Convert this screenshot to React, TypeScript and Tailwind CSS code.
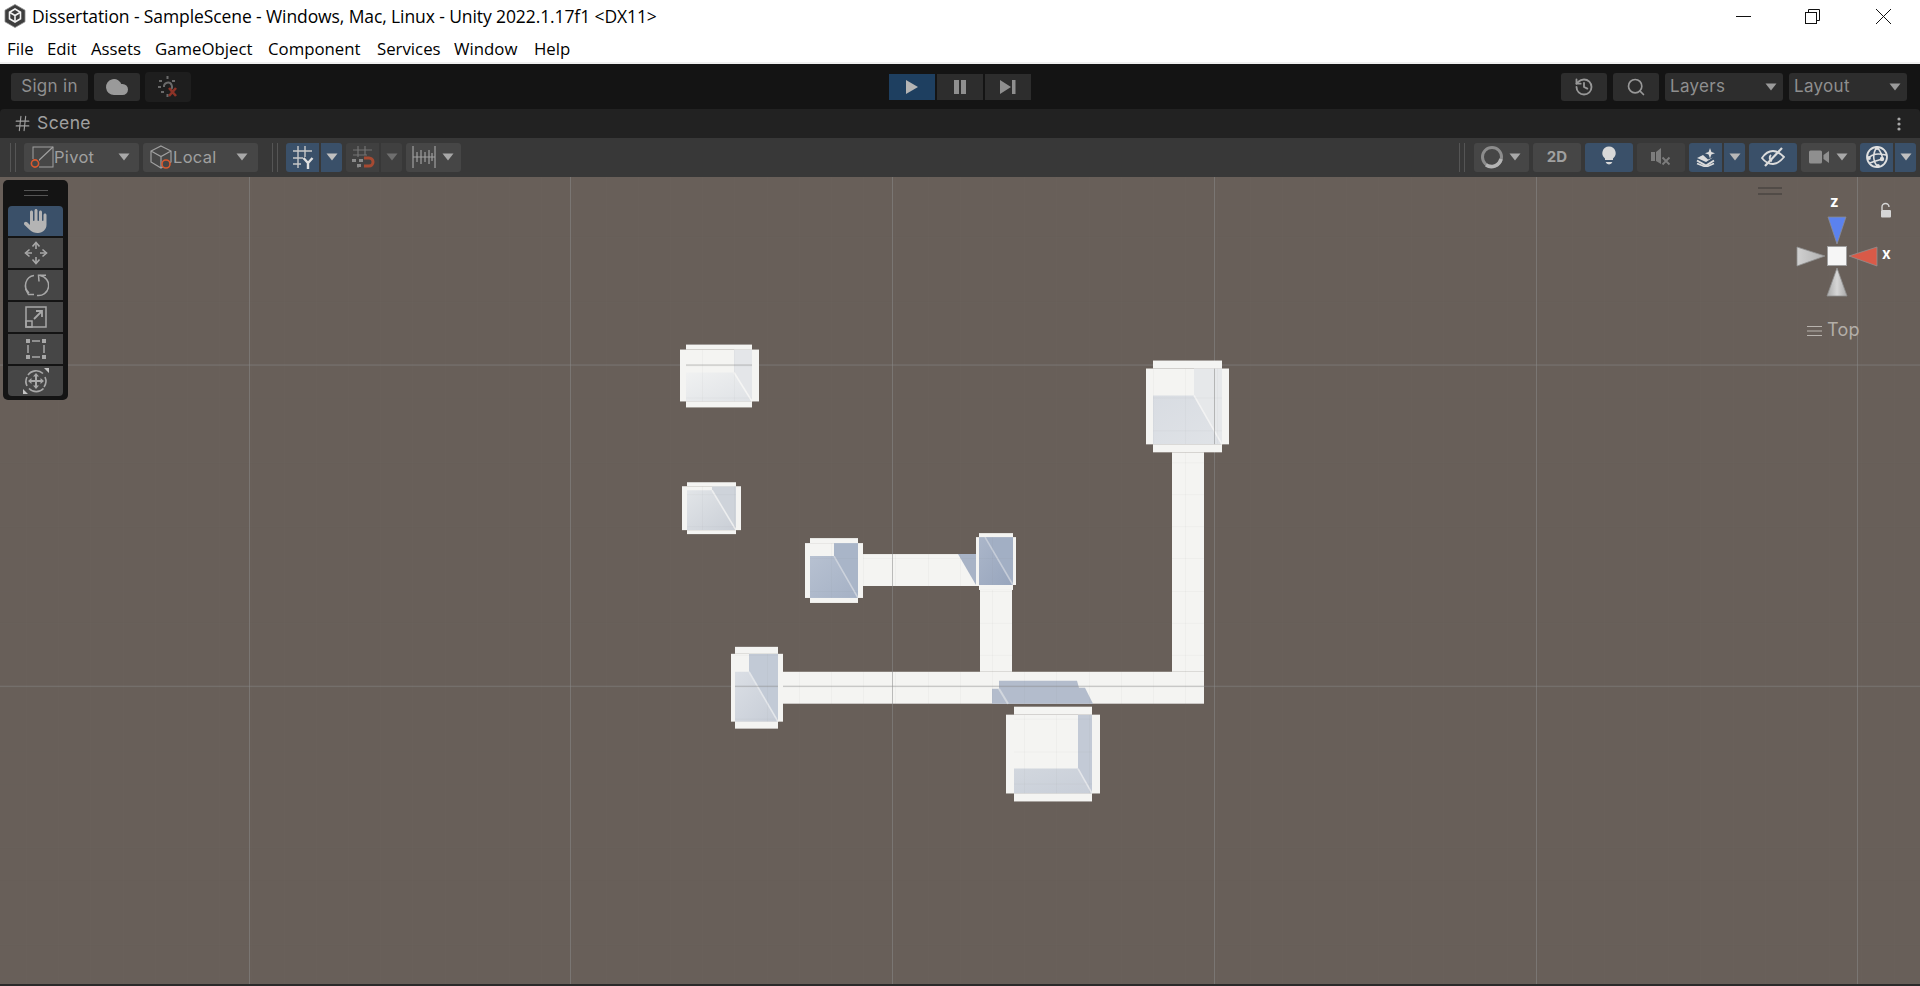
import React from "react";
import { History, Search, EyeOff, Hash, Cloud } from "lucide-react";
import { FaHand } from "react-icons/fa6";

const inter = "font-['Inter','Liberation_Sans',sans-serif]";

function Caret({ color = "#a8a8a8" }: { color?: string }) {
  return (
    <svg width="12" height="8" viewBox="0 0 12 8" className="shrink-0">
      <path d="M0.5 0.5H11.5L6 7.5Z" fill={color} />
    </svg>
  );
}

function UnityLogo() {
  return (
    <svg width="22" height="24" viewBox="0 0 22 24">
      <path d="M11 0.5L21 6.2V17.8L11 23.5L1 17.8V6.2Z" fill="#3d3d3d" stroke="#8a8a8a" strokeWidth="0.8" />
      <path d="M11 5L16.5 8.2V14.8L11 18L5.5 14.8V8.2Z" fill="none" stroke="#f2f2f2" strokeWidth="1.6" />
      <path d="M5.5 8.2L11 11.5L16.5 8.2M11 11.5V18" fill="none" stroke="#f2f2f2" strokeWidth="1.6" />
    </svg>
  );
}

function Collab() {
  return (
    <svg width="24" height="24" viewBox="0 0 24 24">
      <g fill="#6a6a6a">
        <rect x="10.5" y="1" width="2" height="3" />
        <rect x="3" y="5" width="3" height="2" />
        <rect x="16" y="5" width="3" height="2" />
        <rect x="2" y="11" width="3" height="2" />
        <rect x="5" y="16" width="3" height="2" />
        <rect x="10.5" y="19" width="2" height="3" />
      </g>
      <path d="M8 12a4 4 0 1 1 6 3" fill="none" stroke="#6a6a6a" strokeWidth="2" />
      <path d="M13 13l7 8M20 13l-7 8" stroke="#8c3327" strokeWidth="2.6" />
    </svg>
  );
}

function PivotIcon() {
  return (
    <svg width="24" height="24" viewBox="0 0 24 24">
      <rect x="3" y="2" width="20" height="20" fill="none" stroke="#a0a0a0" strokeWidth="1" />
      <path d="M6 18L23 2" stroke="#a0a0a0" strokeWidth="1.2" />
      <rect x="0" y="14" width="9" height="10" fill="#464646" />
      <circle cx="5" cy="18.5" r="3.6" fill="none" stroke="#d9592e" strokeWidth="1.6" />
    </svg>
  );
}

function LocalIcon() {
  return (
    <svg width="24" height="24" viewBox="0 0 24 24">
      <path d="M12 1L22 6V17L12 23L2 17V6Z M2 6L12 11.5L22 6 M12 11.5V23" fill="none" stroke="#a0a0a0" strokeWidth="1.2" />
      <circle cx="17" cy="19" r="4" fill="#464646" stroke="#d9592e" strokeWidth="1.6" />
    </svg>
  );
}

function SnapGridIcon() {
  return (
    <svg width="24" height="24" viewBox="0 0 24 24">
      <path d="M7 1V23M14 1V12M2 6H21M2 13H12M2 19H10" stroke="#c8c8c8" strokeWidth="1.4" fill="none" />
      <path d="M12.5 13L17 18L21.5 13M17 18V24" stroke="#e0e0e0" strokeWidth="2.4" fill="none" />
    </svg>
  );
}

function MagnetIcon() {
  return (
    <svg width="24" height="24" viewBox="0 0 24 24">
      <path d="M7 1V12M14 1V10M2 5H21M2 10H16M7 21V23" stroke="#737373" strokeWidth="1.2" fill="none" />
      <rect x="1" y="14" width="4" height="3" fill="#8a8a8a" />
      <rect x="8" y="14" width="4" height="3" fill="#8a8a8a" />
      <rect x="6" y="19" width="4" height="3" fill="#8a8a8a" />
      <path d="M13 13H18a4 4 0 0 1 0 8H13" fill="none" stroke="#a64a32" strokeWidth="3" />
    </svg>
  );
}

function RulerIcon() {
  return (
    <svg width="24" height="22" viewBox="0 0 24 22">
      <path d="M1 0V22M23 0V22M1 11H23" stroke="#a0a0a0" strokeWidth="1.2" />
      <path d="M5 6V16M9 4V18M13 6V16M17 4V18M20 7V15" stroke="#a0a0a0" strokeWidth="1.2" />
    </svg>
  );
}

function OrbIcon() {
  return (
    <svg width="24" height="24" viewBox="0 0 24 24">
      <circle cx="12" cy="12" r="9.5" fill="none" stroke="#8c8c8c" strokeWidth="3" />
      <path d="M6 20a10 10 0 0 0 15 -6" fill="none" stroke="#b4b4b4" strokeWidth="3.6" />
    </svg>
  );
}

function Bulb() {
  return (
    <svg width="16" height="22" viewBox="0 0 16 22">
      <path d="M8 0.5a6.6 6.6 0 0 1 4 11.9V14H4v-1.6A6.6 6.6 0 0 1 8 0.5Z" fill="#d8d8d8" />
      <path d="M4.6 16h6.8a3.6 3.6 0 0 1 -6.8 0Z" fill="#d8d8d8" />
    </svg>
  );
}

function AudioOff() {
  return (
    <svg width="22" height="20" viewBox="0 0 22 20">
      <rect x="1" y="5" width="4" height="9" fill="#7c7c7c" />
      <path d="M6 5L11 1V17L6 14Z" fill="#7c7c7c" />
      <path d="M12.5 10.5L19.5 17.5M19.5 10.5L12.5 17.5" stroke="#7c7c7c" strokeWidth="1.8" />
    </svg>
  );
}

function FxIcon() {
  return (
    <svg width="20" height="20" viewBox="0 0 20 20">
      <path d="M14 1L15.4 5L19 6.2L15.4 7.5L14 11.5L12.6 7.5L9 6.2L12.6 5Z" fill="#dcdcdc" />
      <path d="M1 11L7 8L12 12.5L17 10.5L10 15Z" fill="#dcdcdc" />
      <path d="M1 13.5L10 18.5L18 13.5" fill="none" stroke="#dcdcdc" strokeWidth="2" />
      <path d="M1 16.5L10 20L18 16.5" fill="none" stroke="#dcdcdc" strokeWidth="1.6" />
    </svg>
  );
}

function EyeSlash() {
  return (
    <svg width="24" height="20" viewBox="0 0 24 20" fill="none" stroke="#dcdcdc">
      <path d="M1 11C5 5 9 4 12 4C16 4 19 6 23 10C19 15 16 17 12 17C8 17 4 15 1 11Z" strokeWidth="1.8" />
      <path d="M10 8a3.5 3.5 0 0 0 1 6" strokeWidth="2" />
      <path d="M4 19L21 1" strokeWidth="2.2" />
    </svg>
  );
}

function CameraIcon() {
  return (
    <svg width="20" height="14" viewBox="0 0 20 14">
      <rect x="0" y="0.5" width="13" height="13" rx="1.5" fill="#8f8f8f" />
      <path d="M14.5 5L20 1V13L14.5 9Z" fill="#8f8f8f" />
    </svg>
  );
}

function GizmoIcon() {
  return (
    <svg width="24" height="24" viewBox="0 0 24 24">
      <circle cx="12" cy="12" r="10" fill="none" stroke="#e0e0e0" strokeWidth="1.8" />
      <path d="M3 13C8 9 12 8 21 10M12 2C7 9 8 17 13 22M12 2C16 7 18 11 17 14M5 18C10 16 14 15 17 14" fill="none" stroke="#e0e0e0" strokeWidth="1.6" />
      <circle cx="12" cy="3" r="1.9" fill="#e0e0e0" />
      <circle cx="4" cy="13" r="1.9" fill="#e0e0e0" />
      <circle cx="17" cy="14" r="2.2" fill="#e0e0e0" />
      <circle cx="13" cy="21" r="1.9" fill="#e0e0e0" />
    </svg>
  );
}

function MoveIcon() {
  return (
    <svg width="26" height="26" viewBox="0 0 26 26" fill="none" stroke="#a8a8a8" strokeWidth="1.6">
      <path d="M13 3V9M13 17V23M3 13H9M17 13H23" />
      <path d="M9.5 6.5L13 2.5L16.5 6.5M9.5 19.5L13 23.5L16.5 19.5M6.5 9.5L2.5 13L6.5 16.5M19.5 9.5L23.5 13L19.5 16.5" />
    </svg>
  );
}

function RotateIcon() {
  return (
    <svg width="26" height="26" viewBox="0 0 26 26" fill="none" stroke="#a8a8a8" strokeWidth="1.5">
      <path d="M11 3.5A10 10 0 0 0 6 21" />
      <path d="M17 3.5A10 10 0 0 1 14 23.5" />
      <path d="M16 9.5L15.5 3.2H23" />
      <path d="M2.5 17L5.5 22.5L11 22.5" />
    </svg>
  );
}

function ScaleIcon() {
  return (
    <svg width="24" height="24" viewBox="0 0 24 24" fill="none" stroke="#a8a8a8" strokeWidth="1.5">
      <rect x="2" y="2" width="20" height="20" />
      <rect x="2" y="16" width="6" height="6" />
      <path d="M10 14L18 6M12 6H18V12" strokeWidth="1.8" />
    </svg>
  );
}

function RectIcon() {
  return (
    <svg width="22" height="22" viewBox="0 0 22 22" fill="#a8a8a8">
      <rect x="1" y="1" width="4" height="4" />
      <rect x="17" y="1" width="4" height="4" />
      <rect x="1" y="17" width="4" height="4" />
      <rect x="17" y="17" width="4" height="4" />
      <path d="M7 3H15M7 19H15M3 7V15M19 7V15" stroke="#a8a8a8" strokeWidth="1.5" />
    </svg>
  );
}

function TransformIcon() {
  return (
    <svg width="26" height="26" viewBox="0 0 26 26" fill="none" stroke="#a8a8a8" strokeWidth="1.6">
      <path d="M5 7A10 10 0 0 1 20 5.5M22 9A10 10 0 0 1 21 19M20.5 20.5A10 10 0 0 1 6 20.5M4 18A10 10 0 0 1 4 9" />
      <path d="M13 6V20M6 13H20" strokeWidth="2" />
      <path d="M10 8.5L13 5L16 8.5Z M10 17.5L13 21L16 17.5Z M8.5 10L5 13L8.5 16Z M17.5 10L21 13L17.5 16Z" fill="#a8a8a8" stroke="none" />
      <path d="M0 26V21L5 26Z M26 0V5L21 0Z" fill="#c4c4c4" stroke="none" />
    </svg>
  );
}

type RoomDef = {
  x0: number; x1: number; y0: number; y1: number;
  wx0: number; wx1: number; wy0: number; wy1: number;
  cx: number; cy: number;
  right: string; bottomId: string; hl: string;
};

const rooms: RoomDef[] = [
  { x0: 686, x1: 752, y0: 345, y1: 408, wx0: 680, wx1: 759, wy0: 350, wy1: 402, cx: 734, cy: 373, right: "#e4e6e9", bottomId: "b1", hl: "#f5f5f4" },
  { x0: 687, x1: 736, y0: 483, y1: 535, wx0: 682, wx1: 741, wy0: 487, wy1: 531, cx: 712, cy: 491, right: "#ced3da", bottomId: "b2", hl: "#edeeef" },
  { x0: 810, x1: 858, y0: 539, y1: 604, wx0: 805, wx1: 863, wy0: 544, wy1: 599, cx: 834, cy: 557, right: "#a9b5c8", bottomId: "b3", hl: "#ccd2dc" },
  { x0: 979, x1: 1013, y0: 534, y1: 591, wx0: 976, wx1: 1016, wy0: 538, wy1: 586, cx: 985, cy: 538, right: "#a2afc4", bottomId: "b4", hl: "#c5ccd8" },
  { x0: 735, x1: 778, y0: 648, y1: 730, wx0: 731, wx1: 783, wy0: 655, wy1: 723, cx: 749, cy: 673, right: "#c2cad6", bottomId: "b5", hl: "#e3e6ea" },
  { x0: 1153, x1: 1222, y0: 361, y1: 453, wx0: 1146, wx1: 1229, wy0: 369, wy1: 445, cx: 1194, cy: 396, right: "#e6e8ea", bottomId: "b6", hl: "#f3f3f3" },
  { x0: 1014, x1: 1092, y0: 708, y1: 803, wx0: 1006, wx1: 1100, wy0: 716, wy1: 795, cx: 1078, cy: 770, right: "#c3cad6", bottomId: "b7", hl: "#e4e6ea" },
];

const gradients: [string, string, string][] = [
  ["b1", "#f0f1f1", "#dfe2e6"],
  ["b2", "#e2e5e8", "#c9ced6"],
  ["b3", "#b7c1d1", "#a5b1c5"],
  ["b4", "#abb6c9", "#97a5bd"],
  ["b5", "#dbdfe5", "#c6ccd6"],
  ["b6", "#d8dce2", "#e0e3e7"],
  ["b7", "#d2d7de", "#c8ced8"],
];

const WHITE = "#f4f4f2";

function SceneView() {
  const minorX = Array.from({ length: 61 }, (_, i) => 26 + i * 32.2);
  const minorY = Array.from({ length: 27 }, (_, i) => 173 + i * 32.2);
  const majorX = [249, 570, 892, 1214, 1536, 1857];
  const majorY = [365, 687];
  return (
    <svg className="absolute inset-0 h-full w-full" viewBox="0 177 1920 809" preserveAspectRatio="none">
      <defs>
        {gradients.map(([id, a, b]) => (
          <linearGradient key={id} id={id} x1="0" y1="0" x2="1" y2="1">
            <stop offset="0" stopColor={a} />
            <stop offset="1" stopColor={b} />
          </linearGradient>
        ))}
      </defs>
      <rect x="0" y="177" width="1920" height="809" fill="#685f59" />
      <g fill={WHITE}>
        <rect x="863" y="555" width="117" height="32" />
        <rect x="980" y="591" width="32" height="82" />
        <rect x="783" y="673" width="421" height="32" />
        <rect x="1172" y="453" width="32" height="220" />
      </g>
      <path d="M958 555H976V586Z" fill="#a8b3c6" />
      <path d="M999 682H1077L1079 689H1085L1093 705H992V690H999Z" fill="#b3bccc" />
      <path d="M999 690L1008 705" stroke="#d2d7de" strokeWidth="2" />
      {rooms.map((r, i) => (
        <g key={i}>
          <rect x={r.x0} y={r.wy0} width={r.x1 - r.x0} height={r.wy1 - r.wy0} fill={WHITE} />
          <path d={`M${r.cx} ${r.wy0}H${r.x1}V${r.wy1}L${r.cx} ${r.cy}Z`} fill={r.right} />
          <path d={`M${r.x0} ${r.cy}H${r.cx}L${r.x1} ${r.wy1}H${r.x0}Z`} fill={`url(#${r.bottomId})`} />
          <path d={`M${r.cx} ${r.cy}L${r.x1} ${r.wy1}`} stroke={r.hl} strokeWidth="1.6" />
        </g>
      ))}
      <g stroke="#8a8a8a" strokeOpacity="0.05" strokeWidth="1" shapeRendering="crispEdges">
        {minorX.map((x) => (
          <line key={x} x1={Math.round(x) + 0.5} x2={Math.round(x) + 0.5} y1="177" y2="986" />
        ))}
        {minorY.map((y) => (
          <line key={y} y1={Math.round(y) + 0.5} y2={Math.round(y) + 0.5} x1="0" x2="1920" />
        ))}
      </g>
      <g stroke="#8a8a8a" strokeOpacity="0.55" strokeWidth="1" shapeRendering="crispEdges">
        {majorX.map((x) => (
          <line key={x} x1={x + 0.5} x2={x + 0.5} y1="177" y2="986" />
        ))}
        {majorY.map((y) => (
          <line key={y} y1={y + 0.5} y2={y + 0.5} x1="0" x2="1920" />
        ))}
      </g>
      <g fill={WHITE}>
        {rooms.map((r, i) => (
          <g key={i}>
            <rect x={r.x0} y={r.y0} width={r.x1 - r.x0} height={r.wy0 - r.y0} />
            <rect x={r.x0} y={r.wy1} width={r.x1 - r.x0} height={r.y1 - r.wy1} />
            <rect x={r.wx0} y={r.wy0} width={r.x0 - r.wx0} height={r.wy1 - r.wy0} />
            <rect x={r.x1} y={r.wy0} width={r.wx1 - r.x1} height={r.wy1 - r.wy0} />
          </g>
        ))}
      </g>
    </svg>
  );
}

function Gizmo() {
  return (
    <div className="absolute left-[1740px] top-0 h-[180px] w-[180px]">
      <svg className="absolute inset-0" width="180" height="180" viewBox="1740 177 180 180">
        <defs>
          <linearGradient id="coneH" x1="0" y1="0" x2="1" y2="0">
            <stop offset="0" stopColor="#d0d0d0" />
            <stop offset="1" stopColor="#b0b0b0" />
          </linearGradient>
          <linearGradient id="coneV" x1="0" y1="0" x2="1" y2="0">
            <stop offset="0" stopColor="#a8a8a8" />
            <stop offset="0.5" stopColor="#d6d6d6" />
            <stop offset="1" stopColor="#a8a8a8" />
          </linearGradient>
        </defs>
        <path d="M1758 188H1782M1758 194H1782" stroke="#4a4541" strokeWidth="1.4" />
        <path d="M1828 217H1846L1837 244Z" fill="#5b82ee" stroke="#8a8a90" strokeWidth="0.8" />
        <path d="M1797 247V266L1825 256Z" fill="url(#coneH)" stroke="#8f8f8f" strokeWidth="0.8" />
        <path d="M1877 247V266L1849 256Z" fill="#d95a48" stroke="#8f8f8f" strokeWidth="0.8" />
        <path d="M1837 268L1827 296H1847Z" fill="url(#coneV)" stroke="#8f8f8f" strokeWidth="0.8" />
        <rect x="1827.5" y="246.5" width="19" height="19" fill="#f6f6f6" stroke="#a0a0a0" />
        <path d="M1807 326.5H1822M1807 331H1822M1807 335.5H1822" stroke="#b8b3ae" strokeWidth="1.2" />
        <path d="M1882 210V207a3.5 3.5 0 0 1 7 0" fill="none" stroke="#d6d6d6" strokeWidth="1.4" />
        <rect x="1881" y="210" width="10" height="7.5" rx="1" fill="#d6d6d6" />
      </svg>
      <span className={`${inter} absolute left-[90px] top-[17px] text-[15px] leading-4 font-bold text-white`}>z</span>
      <span className={`${inter} absolute left-[142px] top-[69px] text-[15px] leading-4 font-bold text-white`}>x</span>
      <span className={`${inter} absolute left-[87px] top-[143px] text-[18px] leading-5 tracking-[0.3px] text-[#b3aea8]`}>Top</span>
    </div>
  );
}

function ToolPalette() {
  const tools = [
    { key: "hand", active: true, icon: <FaHand size={24} color="#b4b4b4" /> },
    { key: "move", active: false, icon: <MoveIcon /> },
    { key: "rot", active: false, icon: <RotateIcon /> },
    { key: "scale", active: false, icon: <ScaleIcon /> },
    { key: "rect", active: false, icon: <RectIcon /> },
    { key: "tr", active: false, icon: <TransformIcon /> },
  ];
  return (
    <div className="absolute left-[3px] top-[3px] flex h-[220px] w-[65px] flex-col rounded-[5px] bg-[#141414] px-[5px] pb-[4px]">
      <div className="flex h-[26px] flex-col items-center justify-center gap-[4px]">
        <div className="h-px w-[24px] bg-[#555]" />
        <div className="h-px w-[24px] bg-[#555]" />
      </div>
      <div className="flex flex-col gap-[2px]">
        {tools.map((t, i) => (
          <div
            key={t.key}
            className={
              "flex h-[30px] items-center justify-center " +
              (t.active ? "bg-[#3a5069] " : "bg-[#464646] ") +
              (i === 0 ? "rounded-t-[4px]" : i === 5 ? "rounded-b-[4px]" : "")
            }
          >
            {t.icon}
          </div>
        ))}
      </div>
    </div>
  );
}

export default function App() {
  return (
    <div className="flex h-[986px] w-[1920px] flex-col overflow-hidden bg-white">
      <div className="relative flex h-[32px] items-center bg-white pl-[4px]">
        <UnityLogo />
        <span className="ml-[6px] pt-[1px] font-['Open_Sans',sans-serif] text-[17.5px] tracking-[-0.1px] whitespace-nowrap text-black">
          Dissertation - SampleScene - Windows, Mac, Linux - Unity 2022.1.17f1 &lt;DX11&gt;
        </span>
        <div className="ml-auto flex items-center">
          <svg width="15" height="15" viewBox="0 0 15 15" className="mr-[54px]">
            <path d="M0 7.5H15" stroke="#111" strokeWidth="1" />
          </svg>
          <svg width="15" height="15" viewBox="0 0 15 15" className="mr-[56px]">
            <rect x="0.5" y="3.5" width="11" height="11" fill="none" stroke="#111" />
            <path d="M3.5 3.5V0.5H14.5V11.5H11.5" fill="none" stroke="#111" />
          </svg>
          <svg width="15" height="15" viewBox="0 0 15 15" className="mr-[29px]">
            <path d="M0 0L15 15M15 0L0 15" stroke="#111" strokeWidth="1" />
          </svg>
        </div>
      </div>
      <div className="flex h-[32px] items-center border-b-2 border-[#f0f0f0] bg-white pt-[3px] pl-[7px] font-['Open_Sans',sans-serif] text-[16.8px] text-black">
        <span className="w-[40px]">File</span>
        <span className="w-[44px]">Edit</span>
        <span className="w-[64px]">Assets</span>
        <span className="w-[113px]">GameObject</span>
        <span className="w-[109px]">Component</span>
        <span className="w-[77px]">Services</span>
        <span className="w-[80px]">Window</span>
        <span>Help</span>
      </div>
      <div className="flex h-[45px] items-center bg-[#141414] pl-[11px]">
        <div className={`${inter} flex h-[28px] w-[77px] items-center justify-center rounded-[3px] bg-[#2d2d2d] text-[17px] tracking-[0.3px] text-[#8f8f8f]`}>
          Sign in
        </div>
        <div className="ml-[6px] flex h-[28px] w-[46px] items-center justify-center rounded-[3px] bg-[#2d2d2d]">
          <Cloud size={24} color="#9a9a9a" fill="#9a9a9a" />
        </div>
        <div className="ml-[5px] flex h-[30px] w-[46px] items-center justify-center rounded-[4px] bg-[#1e1e1e]">
          <Collab />
        </div>
        <div className="ml-[698px] flex h-[26px] gap-[2px]">
          <div className="flex w-[46px] items-center justify-center bg-[#1e3f60]">
            <svg width="12" height="14" viewBox="0 0 12 14"><path d="M0 0L12 7L0 14Z" fill="#b4b4b4" /></svg>
          </div>
          <div className="flex w-[46px] items-center justify-center bg-[#2d2d2d]">
            <svg width="12" height="14" viewBox="0 0 12 14"><path d="M0 0H5V14H0ZM7 0H12V14H7Z" fill="#8f8f8f" /></svg>
          </div>
          <div className="flex w-[46px] items-center justify-center bg-[#2d2d2d]">
            <svg width="16" height="14" viewBox="0 0 16 14"><path d="M0 0L11 7L0 14ZM12 0H15.5V14H12Z" fill="#8f8f8f" /></svg>
          </div>
        </div>
        <div className={`${inter} ml-auto mr-[13px] flex h-[28px] gap-[6px] text-[17px] tracking-[0.3px] text-[#8f8f8f]`}>
          <div className="flex w-[46px] items-center justify-center rounded-[3px] bg-[#2d2d2d]">
            <History size={20} color="#989898" strokeWidth={2.2} />
          </div>
          <div className="flex w-[46px] items-center justify-center rounded-[3px] bg-[#2d2d2d]">
            <Search size={20} color="#989898" strokeWidth={2} />
          </div>
          <div className="flex w-[118px] items-center justify-between rounded-[3px] bg-[#2d2d2d] pr-[6px] pl-[5px]">
            <span>Layers</span>
            <Caret color="#9a9a9a" />
          </div>
          <div className="flex w-[118px] items-center justify-between rounded-[3px] bg-[#2d2d2d] pr-[6px] pl-[5px]">
            <span>Layout</span>
            <Caret color="#9a9a9a" />
          </div>
        </div>
      </div>
      <div className="flex h-[29px] bg-[#141414]">
        <div className={`${inter} flex flex-1 items-center rounded-t-[4px] bg-[#222222] pl-[13px] text-[17.5px] tracking-[0.4px] text-[#a0a0a0]`}>
          <Hash size={19} color="#a0a0a0" strokeWidth={1.4} />
          <span className="ml-[5px]">Scene</span>
          <svg width="4" height="14" viewBox="0 0 4 14" className="ml-auto mr-[19px]">
            <circle cx="2" cy="2" r="1.6" fill="#a8a8a8" />
            <circle cx="2" cy="7" r="1.6" fill="#a8a8a8" />
            <circle cx="2" cy="12" r="1.6" fill="#a8a8a8" />
          </svg>
        </div>
      </div>
      <div className="flex h-[39px] items-center bg-[#383838] pb-[1px] pl-[10px]">
        <div className="flex h-[29px] w-[6px] justify-between">
          <div className="w-px bg-[#555]" />
          <div className="w-px bg-[#555]" />
        </div>
        <div className={`${inter} ml-[8px] flex h-[29px] w-[115px] items-center rounded-[3px] bg-[#464646] pr-[9px] pl-[6px] text-[16.5px] tracking-[0.3px] text-[#a0a0a0]`}>
          <PivotIcon />
          <span>Pivot</span>
          <span className="ml-auto"><Caret /></span>
        </div>
        <div className={`${inter} ml-[4px] flex h-[29px] w-[115px] items-center rounded-[3px] bg-[#464646] pr-[10px] pl-[6px] text-[16.5px] tracking-[0.3px] text-[#a0a0a0]`}>
          <LocalIcon />
          <span>Local</span>
          <span className="ml-auto"><Caret /></span>
        </div>
        <div className="ml-[14px] flex h-[29px] w-[6px] justify-between">
          <div className="w-px bg-[#555]" />
          <div className="w-px bg-[#555]" />
        </div>
        <div className="ml-[8px] flex h-[29px] w-[33px] items-center justify-center rounded-l-[3px] bg-[#3a5069]">
          <SnapGridIcon />
        </div>
        <div className="ml-[2px] flex h-[29px] w-[21px] items-center justify-center rounded-r-[3px] bg-[#3a5069]">
          <Caret color="#c0c0c0" />
        </div>
        <div className="ml-[4px] flex h-[29px] w-[33px] items-center justify-center rounded-l-[3px] bg-[#404040]">
          <MagnetIcon />
        </div>
        <div className="ml-[2px] flex h-[29px] w-[21px] items-center justify-center rounded-r-[3px] bg-[#404040]">
          <Caret color="#6e6e6e" />
        </div>
        <div className="ml-[4px] flex h-[29px] w-[55px] items-center gap-[6px] rounded-[3px] bg-[#464646] pl-[6px]">
          <RulerIcon />
          <Caret />
        </div>

        <div className="ml-auto mr-[9px] h-[29px] w-[6px]">
          <div className="flex h-full w-full justify-between">
            <div className="w-px bg-[#555]" />
            <div className="w-px bg-[#555]" />
          </div>
        </div>
        <div className="flex h-[29px] w-[55px] items-center gap-[5px] rounded-[3px] bg-[#464646] pl-[6px]">
          <OrbIcon />
          <Caret />
        </div>
        <div className={`${inter} ml-[4px] flex h-[29px] w-[48px] items-center justify-center rounded-[3px] bg-[#464646] text-[15px] font-bold text-[#a0a0a0]`}>
          2D
        </div>
        <div className="ml-[4px] flex h-[29px] w-[48px] items-center justify-center rounded-[3px] bg-[#3a5069]">
          <Bulb />
        </div>
        <div className="ml-[4px] flex h-[29px] w-[48px] items-center justify-center rounded-[3px] bg-[#404040]">
          <AudioOff />
        </div>
        <div className="ml-[4px] flex h-[29px] w-[33px] items-center justify-center rounded-l-[3px] bg-[#3a5069]">
          <FxIcon />
        </div>
        <div className="ml-[2px] flex h-[29px] w-[21px] items-center justify-center rounded-r-[3px] bg-[#3a5069]">
          <Caret color="#b8b8b8" />
        </div>
        <div className="ml-[4px] flex h-[29px] w-[48px] items-center justify-center rounded-[3px] bg-[#3a5069]">
          <EyeSlash />
        </div>
        <div className="ml-[4px] flex h-[29px] w-[55px] items-center gap-[7px] rounded-[3px] bg-[#464646] pl-[8px]">
          <CameraIcon />
          <Caret />
        </div>
        <div className="ml-[4px] flex h-[29px] w-[33px] items-center justify-center rounded-l-[3px] bg-[#3a5069]">
          <GizmoIcon />
        </div>
        <div className="ml-[2px] mr-[4px] flex h-[29px] w-[21px] items-center justify-center rounded-r-[3px] bg-[#3a5069]">
          <Caret color="#c0c0c0" />
        </div>
      </div>
      <div className="relative flex-1 overflow-hidden">
        <SceneView />
        <ToolPalette />
        <Gizmo />
      </div>
      <div className="h-[2px] bg-[#2a2a2a]" />
    </div>
  );
}
